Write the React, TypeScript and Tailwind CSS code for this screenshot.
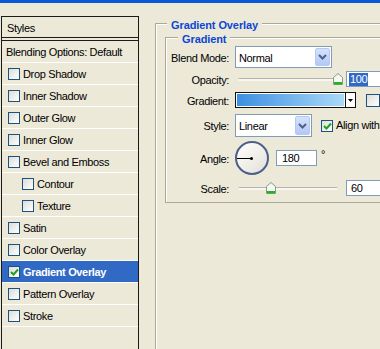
import React from 'react'

const styleRows: { label: string; indent?: boolean; checked?: boolean }[] = [
  { label: 'Drop Shadow' },
  { label: 'Inner Shadow' },
  { label: 'Outer Glow' },
  { label: 'Inner Glow' },
  { label: 'Bevel and Emboss' },
  { label: 'Contour', indent: true },
  { label: 'Texture', indent: true },
  { label: 'Satin' },
  { label: 'Color Overlay' },
  { label: 'Gradient Overlay', checked: true },
  { label: 'Pattern Overlay' },
  { label: 'Stroke' },
]

function Checkbox({ checked }: { checked?: boolean }) {
  return (
    <span className="flex h-[12px] w-[12px] shrink-0 items-center justify-center border border-[#1c5180] bg-gradient-to-br from-[#dcdcd7] to-white">
      {checked && (
        <svg width="9" height="8" viewBox="0 0 9 8">
          <path d="M1 4 L3.5 6.5 L8 1.5" stroke="#21a121" strokeWidth="2" fill="none" />
        </svg>
      )}
    </span>
  )
}

function Chevron() {
  return (
    <span className="flex h-full w-[15px] items-center justify-center rounded-[2px] border border-[#b6c8f2] bg-gradient-to-b from-[#d6e2fc] to-[#b4c8f6]">
      <svg width="9" height="6" viewBox="0 0 9 6">
        <path d="M1 1 L4.5 4.5 L8 1" stroke="#4d6185" strokeWidth="2" fill="none" />
      </svg>
    </span>
  )
}

function Select({ value, width }: { value: string; width: string }) {
  return (
    <div className={`flex h-full items-center justify-between border border-[#7f9db9] bg-white p-[1px] pl-[3px] ${width}`}>
      <span className="pt-[2px]">{value}</span>
      <Chevron />
    </div>
  )
}

function Thumb() {
  return (
    <svg width="10" height="12" viewBox="0 0 10 12" className="shrink-0">
      <path d="M0.5 11.5 V4.5 L5 0.5 L9.5 4.5 V11.5 Z" fill="#f6f6f2" stroke="#8a9a88" />
      <rect x="1" y="9" width="8" height="2.5" fill="#21b521" />
    </svg>
  )
}

function Slider({ at }: { at: number }) {
  return (
    <div className="relative flex h-full w-[100px] items-center">
      <div className="h-[3px] w-full rounded-[2px] border-t border-[#b5b4aa] bg-[#f7f6f2]" />
      <div className="absolute top-1/2 -translate-y-1/2" style={{ left: at }}>
        <Thumb />
      </div>
    </div>
  )
}

function Row({ label, h, mt, children }: { label: string; h: string; mt: string; children: React.ReactNode }) {
  return (
    <div className={`flex items-center ${h} ${mt}`}>
      <span className="w-[64px] shrink-0 pr-[1px] pt-[2px] text-right">{label}</span>
      <div className="ml-[5px] flex h-full items-center">{children}</div>
    </div>
  )
}

export default function App() {
  return (
    <div
      className="flex h-[349px] w-[380px] flex-col overflow-hidden bg-[#ece9d8] text-[11px] leading-none tracking-[-0.35px] text-black"
      style={{ fontFamily: '"Liberation Sans", Arial, sans-serif' }}
    >
      <div className="h-[3px] shrink-0 bg-[#0a58d8]" />

      <div className="flex flex-1">
        {/* styles list */}
        <div className="ml-[1px] mt-[13px] h-[400px] w-[138px] shrink-0 border border-[#1a1a1a]">
          <div className="flex h-[24px] items-center border-b-[4px] border-double border-[#1a1a1a] pl-[5px] pt-[3px]">Styles</div>
          <div className="flex h-[22px] items-center border-b border-white pl-[4px] pt-[2px]">Blending Options: Default</div>
          {styleRows.map((r) => (
            <div
              key={r.label}
              className={`flex h-[22px] items-center gap-[3px] border-b border-white pt-[1px] ${r.indent ? 'pl-[20px]' : 'pl-[6px]'} ${
                r.checked ? 'bg-[#316ac5] font-bold text-white' : ''
              }`}
            >
              <Checkbox checked={r.checked} />
              <span className="pt-[1px]">{r.label}</span>
            </div>
          ))}
        </div>

        {/* settings */}
        <div className="ml-[16px] mt-[20px] flex-1">
          <div className="relative h-[360px] w-[240px] border border-[#aca899] shadow-[inset_1px_1px_0_#fff]">
            <span className="absolute left-[11px] top-[-4px] bg-[#ece9d8] px-[4px] font-bold tracking-[-0.1px] text-[#0b46d4]">Gradient Overlay</span>

            <div className="relative ml-[9px] mt-[13px] w-[240px] border border-[#aca899] pb-[6px] shadow-[inset_1px_1px_0_#fff]">
              <span className="absolute left-[12px] top-[-4px] bg-[#ece9d8] px-[4px] font-bold tracking-[-0.1px] text-[#0b46d4]">Gradient</span>

              <Row label="Blend Mode:" h="h-[22px]" mt="mt-[8px]">
                <Select value="Normal" width="w-[97px]" />
              </Row>

              <Row label="Opacity:" h="h-[16px]" mt="mt-[3px]">
                <div className="ml-[3px] flex h-full items-center">
                  <Slider at={95} />
                  <div className="ml-[8px] flex h-full w-[40px] items-center border border-[#7f9db9] bg-white pl-[2px]">
                    <span className="bg-[#316ac5] px-[1px] py-[1px] text-white">100</span>
                  </div>
                </div>
              </Row>

              <Row label="Gradient:" h="h-[16px]" mt="mt-[5px]">
                <div className="flex h-full w-[121px] border border-[#111] bg-white">
                  <div className="m-[1px] flex-1 bg-gradient-to-r from-[#3a8fe0] to-[#aad9f9]" />
                  <div className="flex w-[10px] items-center justify-center border-l border-[#111]">
                    <svg width="5" height="3" viewBox="0 0 5 3">
                      <path d="M0 0 H5 L2.5 3 Z" fill="#000" />
                    </svg>
                  </div>
                </div>
                <div className="ml-[10px] h-[13px] w-[14px] border border-[#1c5180] bg-gradient-to-br from-[#dcdcd7] to-white" />
              </Row>

              <Row label="Style:" h="h-[23px]" mt="mt-[6px]">
                <Select value="Linear" width="w-[77px]" />
                <span className="ml-[9px]">
                  <Checkbox checked />
                </span>
                <span className="ml-[3px] whitespace-nowrap">Align with Layer</span>
              </Row>

              <Row label="Angle:" h="h-[34px]" mt="mt-[4px]">
                <div className="relative h-[34px] w-[34px] rounded-full border-2 border-[#4a5f8c] bg-gradient-to-br from-white to-[#e2e0d6]">
                  <div className="absolute left-0 top-1/2 h-[1px] w-[15px] bg-black" />
                  <div className="absolute left-[13px] top-[14px] h-[3px] w-[3px] rounded-full bg-black" />
                </div>
                <div className="ml-[7px] flex h-[16px] w-[41px] items-center border border-[#7f9db9] bg-white pl-[5px] pt-[1px]">180</div>
                <span className="mb-[8px] ml-[4px]">°</span>
              </Row>

              <Row label="Scale:" h="h-[16px]" mt="mt-[5px]">
                <div className="ml-[3px] flex h-full items-center">
                  <Slider at={28} />
                  <div className="ml-[8px] flex h-full w-[40px] items-center border border-[#7f9db9] bg-white pl-[4px] pt-[1px]">60</div>
                </div>
              </Row>
            </div>
          </div>
        </div>
      </div>
    </div>
  )
}
